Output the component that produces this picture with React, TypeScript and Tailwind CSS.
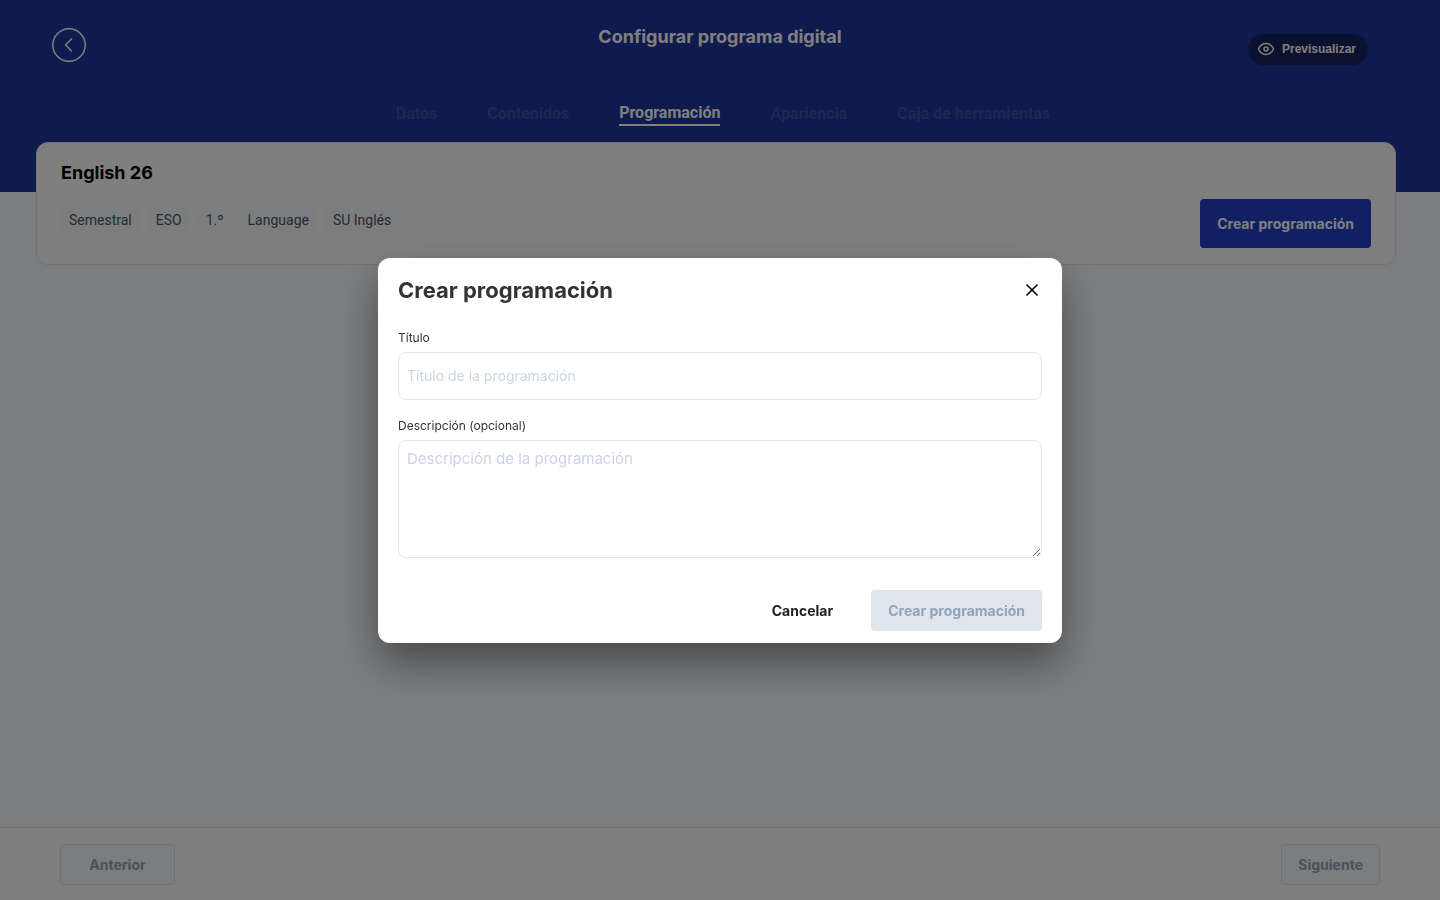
import { useState } from 'react';
import { X } from 'lucide-react';

const tabs = ['Datos', 'Contenidos', 'Programación', 'Apariencia', 'Caja de herramientas'];
const tags = ['Semestral', 'ESO', '1.º', 'Language', 'SU Inglés'];

function EyeIcon() {
  return (
    <svg width="18" height="18" viewBox="0 0 18 18" fill="none" stroke="currentColor" strokeWidth="1.5" aria-hidden="true">
      <path d="M1.5 9C3 5.5 5.800 3.500 9 3.500S15 5.500 16.500 9C15 12.500 12.200 14.500 9 14.500S3 12.500 1.500 9Z" strokeLinejoin="round" />
      <circle cx="9" cy="9" r="2" />
    </svg>
  );
}

function BackIcon() {
  return (
    <svg width="34" height="34" viewBox="0 0 34 34" fill="none" stroke="currentColor" aria-hidden="true">
      <circle cx="17" cy="17" r="16.200" strokeWidth="1.500" />
      <path d="M19.500 11L13.500 17L19.500 23" strokeWidth="1.500" strokeLinecap="round" strokeLinejoin="round" />
    </svg>
  );
}

function Header() {
  return (
    <header className="h-48 bg-[#1e349e] text-white">
      <div className="grid h-[90px] grid-cols-[1fr_auto_1fr] pl-[52px] pr-[72px]">
        <button type="button" aria-label="Volver" className="mt-7 size-[34px] rounded-full">
          <BackIcon />
        </button>
        <h1 className="mt-6 pl-5 text-lg leading-[26px] font-bold">Configurar programa digital</h1>
        <button
          type="button"
          className="mt-[34px] flex h-[31px] items-center gap-[7px] justify-self-end rounded-full bg-[#14255f] pr-3 pb-0.5 pl-[9px] font-['Liberation_Sans',sans-serif] text-xs font-bold"
        >
          <EyeIcon />
          Previsualizar
        </button>
      </div>
      <nav className="flex justify-center gap-[50px] pt-3 pl-1.5 font-[Roboto,sans-serif] text-base leading-[22px] font-bold">
        {tabs.map((tab) => (
          <a
            key={tab}
            href="#"
            className={tab === 'Programación' ? 'border-b-2 border-white text-white' : 'pt-px text-[#3d519f]'}
          >
            {tab}
          </a>
        ))}
      </nav>
    </header>
  );
}

function ProgramCard({ onCreate }: { onCreate: () => void }) {
  return (
    <section className="-mt-[50px] mr-11 ml-9 rounded-xl border border-[#dfe5ed] bg-white px-6 pt-[17px] pb-4">
      <h2 className="text-lg leading-[26px] font-bold text-black">English 26</h2>
      <div className="mt-[13px] flex items-start justify-between">
        <ul className="mt-[9px] flex gap-2 font-[Roboto,sans-serif] text-sm leading-6 text-[#4f5566]">
          {tags.map((tag) => (
            <li key={tag} className="rounded-md bg-[#f8fafc] px-2">
              {tag}
            </li>
          ))}
        </ul>
        <button
          type="button"
          onClick={onCreate}
          className="h-[49px] rounded bg-[#2341c4] px-[17px] text-sm font-bold text-white"
        >
          Crear programación
        </button>
      </div>
    </section>
  );
}

function Footer() {
  return (
    <footer className="flex justify-between border-t border-[#dfe6ea] bg-white px-[60px] pt-4 pb-[15px] text-sm font-bold text-[#94a3b8]">
      <button type="button" disabled className="h-[41px] w-[115px] rounded border border-[#dfe5ed] bg-[#f8fafc]">
        Anterior
      </button>
      <button type="button" disabled className="h-[41px] rounded border border-[#dfe5ed] bg-[#f8fafc] px-4">
        Siguiente
      </button>
    </footer>
  );
}

function CreateDialog({ onClose }: { onClose: () => void }) {
  return (
    <div className="fixed inset-0 flex items-center justify-center bg-black/50">
      <div
        role="dialog"
        aria-modal="true"
        aria-labelledby="dialog-title"
        className="w-full max-w-[684px] rounded-xl bg-white px-5 pt-4 pb-3 text-[#333] shadow-[0_20px_40px_rgba(0,0,0,0.4)]"
      >
        <div className="flex items-center justify-between">
          <h2 id="dialog-title" className="text-[22px] leading-8 font-bold">
            Crear programación
          </h2>
          <button type="button" aria-label="Cerrar" onClick={onClose} className="flex size-5 items-center justify-center text-black">
            <X size={20} strokeWidth={2} />
          </button>
        </div>
        <form>
          <label htmlFor="title" className="mt-6 block text-xs leading-4">
            Título
          </label>
          <input
            id="title"
            type="text"
            placeholder="Título de la programación"
            className="mt-1.5 block h-12 w-full rounded-lg border border-[#dfe5ed] px-2 text-sm placeholder:text-[#cbd5e1]"
          />
          <label htmlFor="description" className="mt-[18px] block text-xs leading-4">
            Descripción (opcional)
          </label>
          <textarea
            id="description"
            placeholder="Descripción de la programación"
            className="mt-1.5 block h-[118px] w-full rounded-lg border border-[#dfe5ed] px-2 py-1.5 text-[15px] leading-6 placeholder:text-[#cbd5e1]"
          />
          <div className="mt-8 flex justify-end gap-[21px] text-sm font-bold">
            <button type="button" onClick={onClose} className="h-[41px] px-[17px] pt-0.5 text-[#222]">
              Cancelar
            </button>
            <button type="submit" disabled className="h-[41px] rounded bg-[#dfe5ed] px-[17px] pt-0.5 text-[#94a3b8]">
              Crear programación
            </button>
          </div>
        </form>
      </div>
    </div>
  );
}

export default function App() {
  const [open, setOpen] = useState(true);

  return (
    <div className="flex min-h-screen flex-col bg-[#f8fafc] font-[Inter,sans-serif]">
      <Header />
      <main className="grow">
        <ProgramCard onCreate={() => setOpen(true)} />
      </main>
      <Footer />
      {open ? <CreateDialog onClose={() => setOpen(false)} /> : null}
    </div>
  );
}
